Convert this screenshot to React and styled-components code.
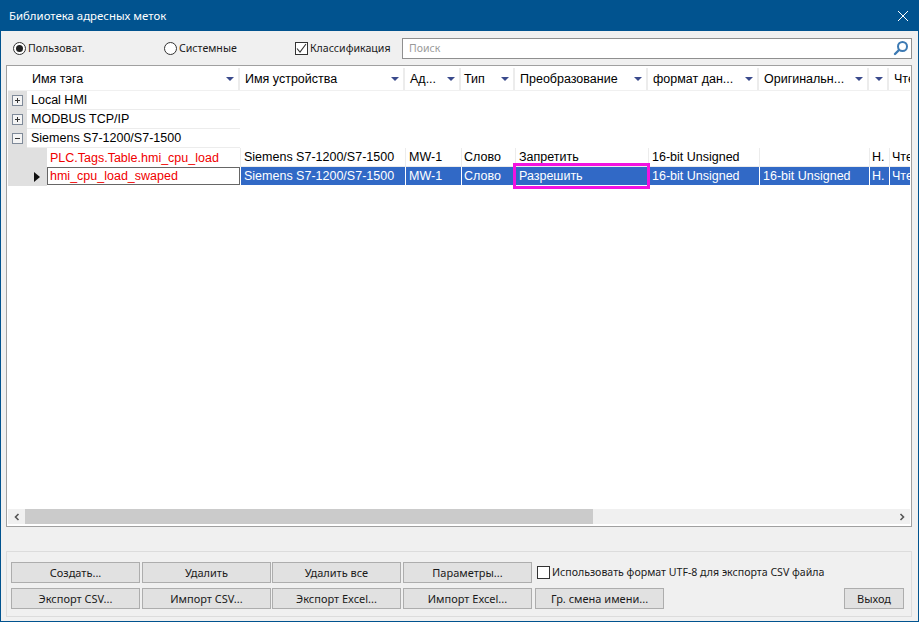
import React from "react";
import styled, { createGlobalStyle } from "styled-components";

const Global = createGlobalStyle`
  html, body { margin: 0; padding: 0; background: #f0f0f0; }
  * { box-sizing: border-box; }
`;
const COLS = "232px 165px 56px 54px 133px 111px 110px 20px 21px";
const UI = `"Noto Sans", "Open Sans", sans-serif`;
const GRID = `"Liberation Sans", Arial, sans-serif`;

const Win = styled.div`
  width: 919px; height: 622px; display: flex; flex-direction: column;
  background: #f0f0f0; border: 1px solid #01538f; border-top: 0; overflow: hidden;
  font-family: ${UI}; font-size: 11px; color: #1a1a1a;
`;
const TitleBar = styled.div`
  height: 31px; flex: none; margin: 0 -1px; background: #01538f; color: #fff;
  display: flex; align-items: center; justify-content: space-between;
  padding: 0 10px 0 9px; font-size: 11.4px;
`;
const Toolbar = styled.div`
  height: 34px; flex: none; display: flex; align-items: center; padding: 0 6px 0 12px;
`;
const Choice = styled.label`
  display: flex; align-items: center; gap: 2px; width: ${p => p.$w}px; flex: none; font-size: 10.6px;
`;
const Radio = styled.span`
  width: 13px; height: 13px; border-radius: 50%; border: 1px solid #333; background: #fff;
  display: flex; align-items: center; justify-content: center; flex: none;
  &::after { content: ""; width: 7px; height: 7px; border-radius: 50%; background: ${p => (p.$on ? "#222" : "transparent")}; }
`;
const Check = styled.span`
  width: 13px; height: 13px; border: 1px solid #333; background: #fff; flex: none;
  display: flex; align-items: center; justify-content: center;
`;
const Search = styled.div`
  flex: 1; height: 21px; border: 1px solid #8f8f8f; background: #fff; display: flex;
  align-items: center; justify-content: space-between; padding: 0 2px 0 6px; color: #9a9a9a; font-size: 10.5px;
`;
const Table = styled.div`
  flex: none; height: 462px; margin: 0 6px 0 5px; border: 1px solid #a0a0a0; background: #fff;
  padding: 1px 1px 2px 1px; display: flex; flex-direction: column; font-family: ${GRID}; font-size: 12.5px; color: #000;
`;
const Head = styled.div`
  display: grid; grid-template-columns: ${COLS}; height: 24px; flex: none; background: #fff;
  border-bottom: 1px solid #f0f0f0;
`;
const HeadCell = styled.div`
  display: flex; align-items: center; justify-content: space-between; position: relative;
  padding: 0 4px 0 ${p => p.$pad ?? 5}px; border-right: 2px solid #ececec; margin-top: 1px; overflow: hidden; white-space: nowrap;
  &:last-child { border-right: 0; padding-right: 0; }
`;
const Tri = styled.i`
  width: 0; height: 0; flex: none; border-left: 4px solid transparent; border-right: 4px solid transparent;
  border-top: 4px solid #3a4a8c;
`;
const Body = styled.div`flex: 1; display: flex; flex-direction: column;`;
const GroupRow = styled.div`
  width: 232px; height: 19px; display: flex; flex: none;
`;
const Gutter = styled.div`
  width: ${p => p.$w}px; flex: none; background: #e0e0e0; display: flex; align-items: center;
  justify-content: ${p => p.$end ? "flex-end" : "center"}; padding-right: ${p => p.$end ? 7 : 0}px;
`;
const GroupName = styled.div`
  flex: 1; display: flex; align-items: center; padding-left: 4px; border-bottom: 1px solid #ececec; border-top: 0;
`;
const DataRow = styled.div`
  display: grid; grid-template-columns: ${COLS}; height: 19px; flex: none;
`;
const NameCell = styled.div`display: flex; min-width: 0;`;
const Name = styled.div`
  flex: 1; color: #f00000; display: flex; align-items: center; padding-left: 3px; white-space: nowrap;
  ${p => p.$edit && "border: 1px solid #666; background: #fff; height: 18px; padding-left: 2px;"}
`;
const Cell = styled.div`
  display: flex; align-items: center; padding-left: ${p => p.$pad ?? 3}px; white-space: nowrap; overflow: hidden;
  background: ${p => (p.$sel ? "#3169c6" : "#fff")}; color: ${p => (p.$sel ? "#fff" : "#000")};
  border-left: 1px solid ${p => (p.$sel ? "#fff" : "#ececec")}; border-bottom: 1px solid ${p => (p.$sel ? "#fff" : "#ececec")};
`;
const MarkedCell = styled(Cell)`
  position: relative; overflow: visible;
  &::after { content: ""; position: absolute; top: -4px; bottom: -4px; left: -3px; right: -2px; border: 3px solid #f312e0; }
`;
const Scroll = styled.div`height: 15px; flex: none; display: flex; background: #f0f0f0; align-items: stretch;`;
const Arrow = styled.div`width: 17px; flex: none; display: flex; align-items: center; justify-content: center;`;
const Thumb = styled.div`width: 568px; flex: none; background: #cbcbcb;`;
const Track = styled.div`flex: 1;`;
const Group = styled.div`
  flex: none; margin: 24px 6px 0 5px; height: 66px; border: 1px solid #dcdcdc; padding: 10px 4px 0 4px;
  display: flex; flex-direction: column; gap: 5px;
`;
const BtnRow = styled.div`display: flex; height: 21px; align-items: center;`;
const Btn = styled.button`
  width: ${p => p.$w ?? 129}px; height: 21px; flex: none; margin-left: ${p => p.$ml ?? 0}px; margin-right: ${p => p.$mr ?? 0}px;
  background: #e1e1e1; border: 1px solid #adadad; padding: 0; font-family: ${UI}; font-size: 11px; color: #1a1a1a;
`;
const Utf = styled.label`display: flex; align-items: center; gap: 2px; margin-left: 5px; font-size: 10.6px; margin-top: -1px;`;
const Spring = styled.div`flex: 1;`;

const Box = ({ minus }) => (
  <svg width="11" height="11" viewBox="0 0 11 11">
    <rect x=".5" y=".5" width="10" height="10" fill="#f4f4f4" stroke="#7f8a99" />
    <path d={minus ? "M3 5.5h5" : "M3 5.5h5M5.5 3v5"} stroke="#333" fill="none" />
  </svg>
);
const Tick = () => (
  <svg width="11" height="11" viewBox="0 0 11 11"><path d="M1 5.5 4 9l6-8" fill="none" stroke="#333" strokeWidth="1.1" /></svg>
);
const heads = [
  ["Имя тэга", 24], ["Имя устройства", 5], ["Ад...", 5], ["Тип", 3], ["Преобразование", 5],
  ["формат дан...", 5], ["Оригинальн...", 5], ["", 0], ["Чте", 5],
];
const pads = [3, 3, 2, 3, 3, 3, 2, 2];
const row1 = ["Siemens S7-1200/S7-1500", "MW-1", "Слово", "Запретить", "16-bit Unsigned", "", "Н.", "Чте"];
const row2 = ["Siemens S7-1200/S7-1500", "MW-1", "Слово", "Разрешить", "16-bit Unsigned", "16-bit Unsigned", "Н.", "Чте"];

export default function App() {
  return (
    <Win>
      <Global />
      <TitleBar>
        <span>Библиотека адресных меток</span>
        <svg width="12" height="12" viewBox="0 0 12 12"><path d="M1 1l10 10M11 1 1 11" stroke="#fff" fill="none" /></svg>
      </TitleBar>
      <Toolbar>
        <Choice $w={151}><Radio $on />Пользоват.</Choice>
        <Choice $w={131}><Radio />Системные</Choice>
        <Choice $w={107}><Check><Tick /></Check>Классификация</Choice>
        <Search>
          Поиск
          <svg width="16" height="16" viewBox="0 0 16 16">
            <circle cx="9.5" cy="6.5" r="4.5" fill="none" stroke="#3d7ab3" strokeWidth="2" />
            <path d="M6 10l-4 4" stroke="#3d7ab3" strokeWidth="2.4" strokeLinecap="round" />
          </svg>
        </Search>
      </Toolbar>
      <Table>
        <Head>
          {heads.map(([t, pad], i) => (
            <HeadCell key={i} $pad={pad}>
              <span>{t}</span>
              {i < 8 && <Tri />}
            </HeadCell>
          ))}
        </Head>
        <Body>
          <GroupRow><Gutter $w={19}><Box /></Gutter><GroupName>Local HMI</GroupName></GroupRow>
          <GroupRow><Gutter $w={19}><Box /></Gutter><GroupName>MODBUS TCP/IP</GroupName></GroupRow>
          <GroupRow><Gutter $w={19}><Box minus /></Gutter><GroupName>Siemens S7-1200/S7-1500</GroupName></GroupRow>
          <DataRow>
            <NameCell><Gutter $w={39} /><Name>PLC.Tags.Table.hmi_cpu_load</Name></NameCell>
            {row1.map((t, i) => <Cell key={i} $pad={pads[i]}>{t}</Cell>)}
          </DataRow>
          <DataRow>
            <NameCell>
              <Gutter $w={39} $end>
                <svg width="6" height="10" viewBox="0 0 6 10"><path d="M0 0l6 5-6 5z" fill="#111" /></svg>
              </Gutter>
              <Name $edit>hmi_cpu_load_swaped</Name>
            </NameCell>
            {row2.map((t, i) => i === 3
              ? <MarkedCell key={i} $sel $pad={pads[i]}>{t}</MarkedCell>
              : <Cell key={i} $sel $pad={pads[i]}>{t}</Cell>)}
          </DataRow>
        </Body>
        <Scroll>
          <Arrow><svg width="8" height="8" viewBox="0 0 8 8"><path d="M5.5 1 2.5 4l3 3" fill="none" stroke="#555" strokeWidth="1.6" /></svg></Arrow>
          <Thumb />
          <Track />
          <Arrow><svg width="8" height="8" viewBox="0 0 8 8"><path d="M2.5 1l3 3-3 3" fill="none" stroke="#555" strokeWidth="1.6" /></svg></Arrow>
        </Scroll>
      </Table>
      <Group>
        <BtnRow>
          <Btn>Создать...</Btn><Btn $ml={2}>Удалить</Btn><Btn $ml={1}>Удалить все</Btn><Btn $ml={2}>Параметры...</Btn>
          <Utf><Check />Использовать формат UTF-8 для экспорта CSV файла</Utf>
        </BtnRow>
        <BtnRow>
          <Btn>Экспорт CSV...</Btn><Btn $ml={2}>Импорт CSV...</Btn><Btn $ml={1}>Экспорт Excel...</Btn><Btn $ml={2}>Импорт Excel...</Btn>
          <Btn $ml={3}>Гр. смена имени...</Btn>
          <Spring />
          <Btn $w={60} $mr={3}>Выход</Btn>
        </BtnRow>
      </Group>
    </Win>
  );
}
